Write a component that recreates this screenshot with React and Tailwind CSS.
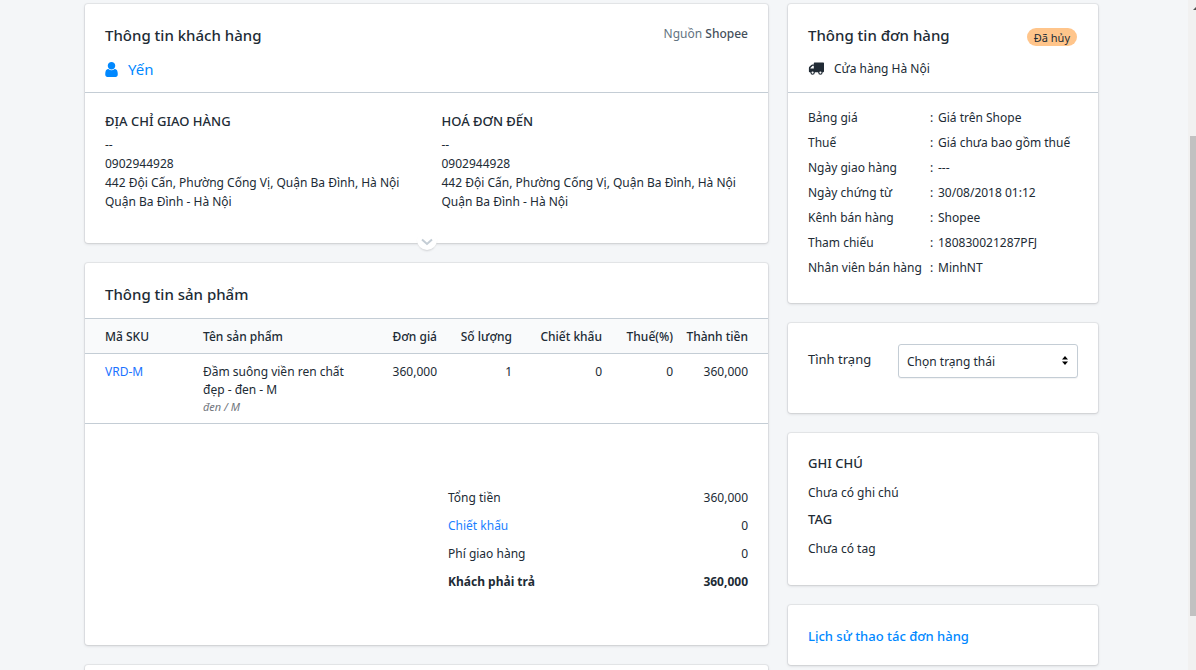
import React, { useState } from "react";

const address = [
  "--",
  "0902944928",
  "442 Đội Cấn, Phường Cống Vị, Quận Ba Đình, Hà Nội",
  "Quận Ba Đình - Hà Nội",
];

const orderInfo = [
  { label: "Bảng giá", value: "Giá trên Shope" },
  { label: "Thuế", value: "Giá chưa bao gồm thuế" },
  { label: "Ngày giao hàng", value: "---" },
  { label: "Ngày chứng từ", value: "30/08/2018 01:12" },
  { label: "Kênh bán hàng", value: "Shopee" },
  { label: "Tham chiếu", value: "180830021287PFJ" },
  { label: "Nhân viên bán hàng", value: "MinhNT" },
];

const products = [
  {
    sku: "VRD-M",
    name: "Đầm suông viền ren chất đẹp - đen - M",
    variant: "đen / M",
    price: "360,000",
    quantity: 1,
    discount: 0,
    tax: 0,
    total: "360,000",
  },
];

const UserIcon = () => (
  <svg viewBox="0 128 1280 1536" className="h-[15px] w-[13px]" fill="currentColor">
    <path d="M1280 1399q0 109-62.5 187t-150.5 78h-854q-88 0-150.5-78t-62.5-187q0-85 8.5-160.5t31.5-152 58.5-131 94-89 134.5-34.5q131 128 313 128t313-128q76 0 134.5 34.5t94 89 58.5 131 31.5 152 8.5 160.5zm-256-887q0 159-112.5 271.5t-271.5 112.5-271.5-112.5-112.5-271.5 112.5-271.5 271.5-112.5 271.5 112.5 112.5 271.5z" />
  </svg>
);

const TruckIcon = () => (
  <svg viewBox="0 0 16 16" className="h-4 w-4" fill="currentColor">
    <path
      fillRule="evenodd"
      d="M6.5 1.5h8.8a.7.7 0 0 1 .7.7v8.1a.9.9 0 0 1-.9.9H1.6a.7.7 0 0 1-.7-.7V6.9c0-.4.2-.8.5-1.1l1.9-1.9c.3-.3.7-.5 1.1-.5h1.4V2.2c0-.4.3-.7.7-.7zM5.8 4.8H4.6L2.4 7v.4h3.4z"
    />
    <circle cx="4.6" cy="11.6" r="2.2" />
    <circle cx="4.6" cy="11.6" r="1.1" fill="#fff" />
    <circle cx="12.4" cy="11.6" r="2.2" />
    <circle cx="12.4" cy="11.6" r="1.1" fill="#fff" />
  </svg>
);

const Card = ({ className = "", children }) => (
  <section
    className={`relative rounded-[3px] bg-white shadow-[0_0_0_1px_rgba(63,63,68,0.07),0_1px_3px_0_rgba(63,63,68,0.18)] ${className}`}
  >
    {children}
  </section>
);

const AddressBlock = ({ title }) => (
  <div>
    <h3 className="mb-[5px] text-[13px] leading-[18px] font-medium">{title}</h3>
    {address.map((line) => (
      <p key={line} className="leading-[19px] whitespace-nowrap">
        {line}
      </p>
    ))}
  </div>
);

const CustomerCard = () => (
  <Card className="pb-8">
    <div className="border-b border-[#c4cdd5] px-5 pt-[19px] pb-[11px]">
      <div className="flex items-start justify-between">
        <h2 className="text-[15px] leading-6 font-medium">
          Thông tin khách hàng
        </h2>
        <p className="pt-px leading-5 text-[#637381]">
          Nguồn <span className="font-medium text-[#454f5b]">Shopee</span>
        </p>
      </div>
      <a
        href="#customer"
        className="mt-[10px] flex items-center gap-[10px] text-[15px] leading-6 text-[#0088ff]"
      >
        <UserIcon />
        Yến
      </a>
    </div>

    {/* Addresses */}
    <div className="grid grid-cols-2 gap-[30px] px-5 pt-[19px]">
      <AddressBlock title="ĐỊA CHỈ GIAO HÀNG" />
      <AddressBlock title="HOÁ ĐƠN ĐẾN" />
    </div>

    {/* Expand Button */}
    <button
      type="button"
      aria-label="Xem thêm"
      className="absolute -bottom-[7px] left-1/2 flex h-5 w-5 -translate-x-1/2 items-center justify-center rounded-full bg-white pt-1 shadow-[0_2px_2px_-1px_rgba(63,63,68,0.2)]"
    >
      <svg viewBox="0 0 12 8" className="h-2 w-3" fill="none">
        <path d="M1 1.5 6 6l5-4.5" stroke="#c4cdd5" strokeWidth="2" />
      </svg>
    </button>
  </Card>
);

const ProductCard = () => (
  <Card className="pb-[49px]">
    <h2 className="px-5 pt-[19px] pb-3 text-[15px] leading-6 font-medium">
      Thông tin sản phẩm
    </h2>
    <table className="w-full table-fixed border-collapse text-right">
      <colgroup>
        <col className="w-[112px]" />
        <col />
        <col className="w-[80px]" />
        <col className="w-[75px]" />
        <col className="w-[90px]" />
        <col className="w-[71px]" />
        <col className="w-[89px]" />
      </colgroup>
      <thead className="border-y border-[#c4cdd5] bg-[#f9fafb]">
        <tr className="whitespace-nowrap">
          <th className="pt-[9px] pb-[7px] pl-5 text-left font-medium">Mã SKU</th>
          <th className="px-[6px] pt-[9px] pb-[7px] text-left font-medium">
            Tên sản phẩm
          </th>
          <th className="px-[6px] pt-[9px] pb-[7px] font-medium">Đơn giá</th>
          <th className="px-[6px] pt-[9px] pb-[7px] font-medium">Số lượng</th>
          <th className="px-[6px] pt-[9px] pb-[7px] font-medium">Chiết khấu</th>
          <th className="px-[6px] pt-[9px] pb-[7px] font-medium">Thuế(%)</th>
          <th className="pt-[9px] pr-5 pb-[7px] font-medium">Thành tiền</th>
        </tr>
      </thead>
      <tbody>
        {products.map((item) => (
          <tr key={item.sku} className="border-b border-[#c4cdd5] align-top">
            <td className="py-[9px] pl-5 text-left">
              <a href="#product" className="text-[#1a73ff]">
                {item.sku}
              </a>
            </td>
            <td className="px-[6px] py-[9px] text-left">
              {item.name}
              <p className="text-[11px] leading-[15px] text-[#71767c] italic">
                {item.variant}
              </p>
            </td>
            <td className="px-[6px] py-[9px]">{item.price}</td>
            <td className="px-[6px] py-[9px]">{item.quantity}</td>
            <td className="px-[6px] py-[9px]">{item.discount}</td>
            <td className="px-[6px] py-[9px]">{item.tax}</td>
            <td className="py-[9px] pr-5">{item.total}</td>
          </tr>
        ))}
      </tbody>
    </table>

    {/* Totals */}
    <dl className="mt-[60px] mr-5 ml-auto w-[300px] leading-7">
      <div className="flex justify-between">
        <dt>Tổng tiền</dt>
        <dd>360,000</dd>
      </div>
      <div className="flex justify-between">
        <dt>
          <a href="#discount" className="text-[#1a80ff]">
            Chiết khấu
          </a>
        </dt>
        <dd>0</dd>
      </div>
      <div className="flex justify-between">
        <dt>Phí giao hàng</dt>
        <dd>0</dd>
      </div>
      <div className="flex justify-between font-bold">
        <dt>Khách phải trả</dt>
        <dd>360,000</dd>
      </div>
    </dl>
  </Card>
);

const OrderCard = () => (
  <Card className="pb-[23px]">
    <div className="border-b border-[#c4cdd5] px-5 pt-[19px] pb-[11px]">
      <div className="flex items-end justify-between">
        <h2 className="text-[15px] leading-6 font-medium">
          Thông tin đơn hàng
        </h2>
        <span className="mr-px mb-px rounded-full bg-[#ffc58b] px-[7px] pt-px text-[11px] leading-[17px]">
          Đã hủy
        </span>
      </div>
      <p className="mt-[10px] flex items-center gap-[10px] leading-6">
        <TruckIcon />
        Cửa hàng Hà Nội
      </p>
    </div>
    <dl className="px-5 pt-3 leading-[25px] whitespace-nowrap">
      {orderInfo.map((row) => (
        <div key={row.label} className="flex">
          <dt className="w-[122px]">{row.label}</dt>
          <dd className="flex">
            <span className="w-2">:</span>
            {row.value}
          </dd>
        </div>
      ))}
    </dl>
  </Card>
);

const StatusCard = () => {
  const [status, setStatus] = useState("");

  return (
    <Card className="flex justify-between px-5 pt-[21px] pb-[35px]">
      <label htmlFor="status" className="pt-[6px] text-[13px] leading-[18px]">
        Tình trạng
      </label>
      <div className="relative w-[180px]">
        <select
          id="status"
          value={status}
          onChange={(e) => setStatus(e.target.value)}
          className="h-[34px] w-full appearance-none rounded-[3px] border border-[#c4cdd5] bg-white px-2 pt-[2px] shadow-[0_1px_1px_rgba(22,29,37,0.05)]"
        >
          <option value="">Chọn trạng thái</option>
        </select>
        <svg
          viewBox="0 0 6 9"
          className="pointer-events-none absolute top-3 right-[10px] h-[9px] w-[6px]"
        >
          <path d="M3 0 6 3.5H0zM0 5.5h6L3 9z" fill="#000" />
        </svg>
      </div>
    </Card>
  );
};

const NoteCard = () => (
  <Card className="px-5 pt-[21px] pb-[27px]">
    <h3 className="text-[13px] leading-[18px] font-medium">GHI CHÚ</h3>
    <p className="mt-3">Chưa có ghi chú</p>
    <h3 className="mt-2 text-[13px] leading-[18px] font-medium">TAG</h3>
    <p className="mt-3">Chưa có tag</p>
  </Card>
);

const App = () => {
  return (
    <div className="flex h-screen overflow-hidden bg-[#f4f6f8] font-['Noto_Sans','Open_Sans',sans-serif] text-[12px] leading-[18px] text-[#212b35]">
      <main className="flex flex-1 items-start gap-5 pt-1 pr-[90px] pl-[85px]">
        <div className="flex flex-1 flex-col gap-5">
          <CustomerCard />
          <ProductCard />
          <Card className="h-20" />
        </div>
        <aside className="flex w-[310px] flex-col gap-5">
          <OrderCard />
          <StatusCard />
          <NoteCard />
          <Card className="px-5 pt-[21px] pb-[19px]">
            <a
              href="#history"
              className="block text-[13px] leading-5 font-medium text-[#0088ff]"
            >
              Lịch sử thao tác đơn hàng
            </a>
          </Card>
        </aside>
      </main>

      {/* Scrollbar */}
      <div className="flex w-2 flex-col bg-[#f1f1f1] pl-[2px]">
        <svg viewBox="0 0 6 10" className="h-[10px] w-[6px]">
          <path d="M3 10 6 7v3z" fill="#505050" />
        </svg>
        <div className="mt-[126px] h-[480px] bg-[#c1c1c1]" />
      </div>
    </div>
  );
};

export default App;
